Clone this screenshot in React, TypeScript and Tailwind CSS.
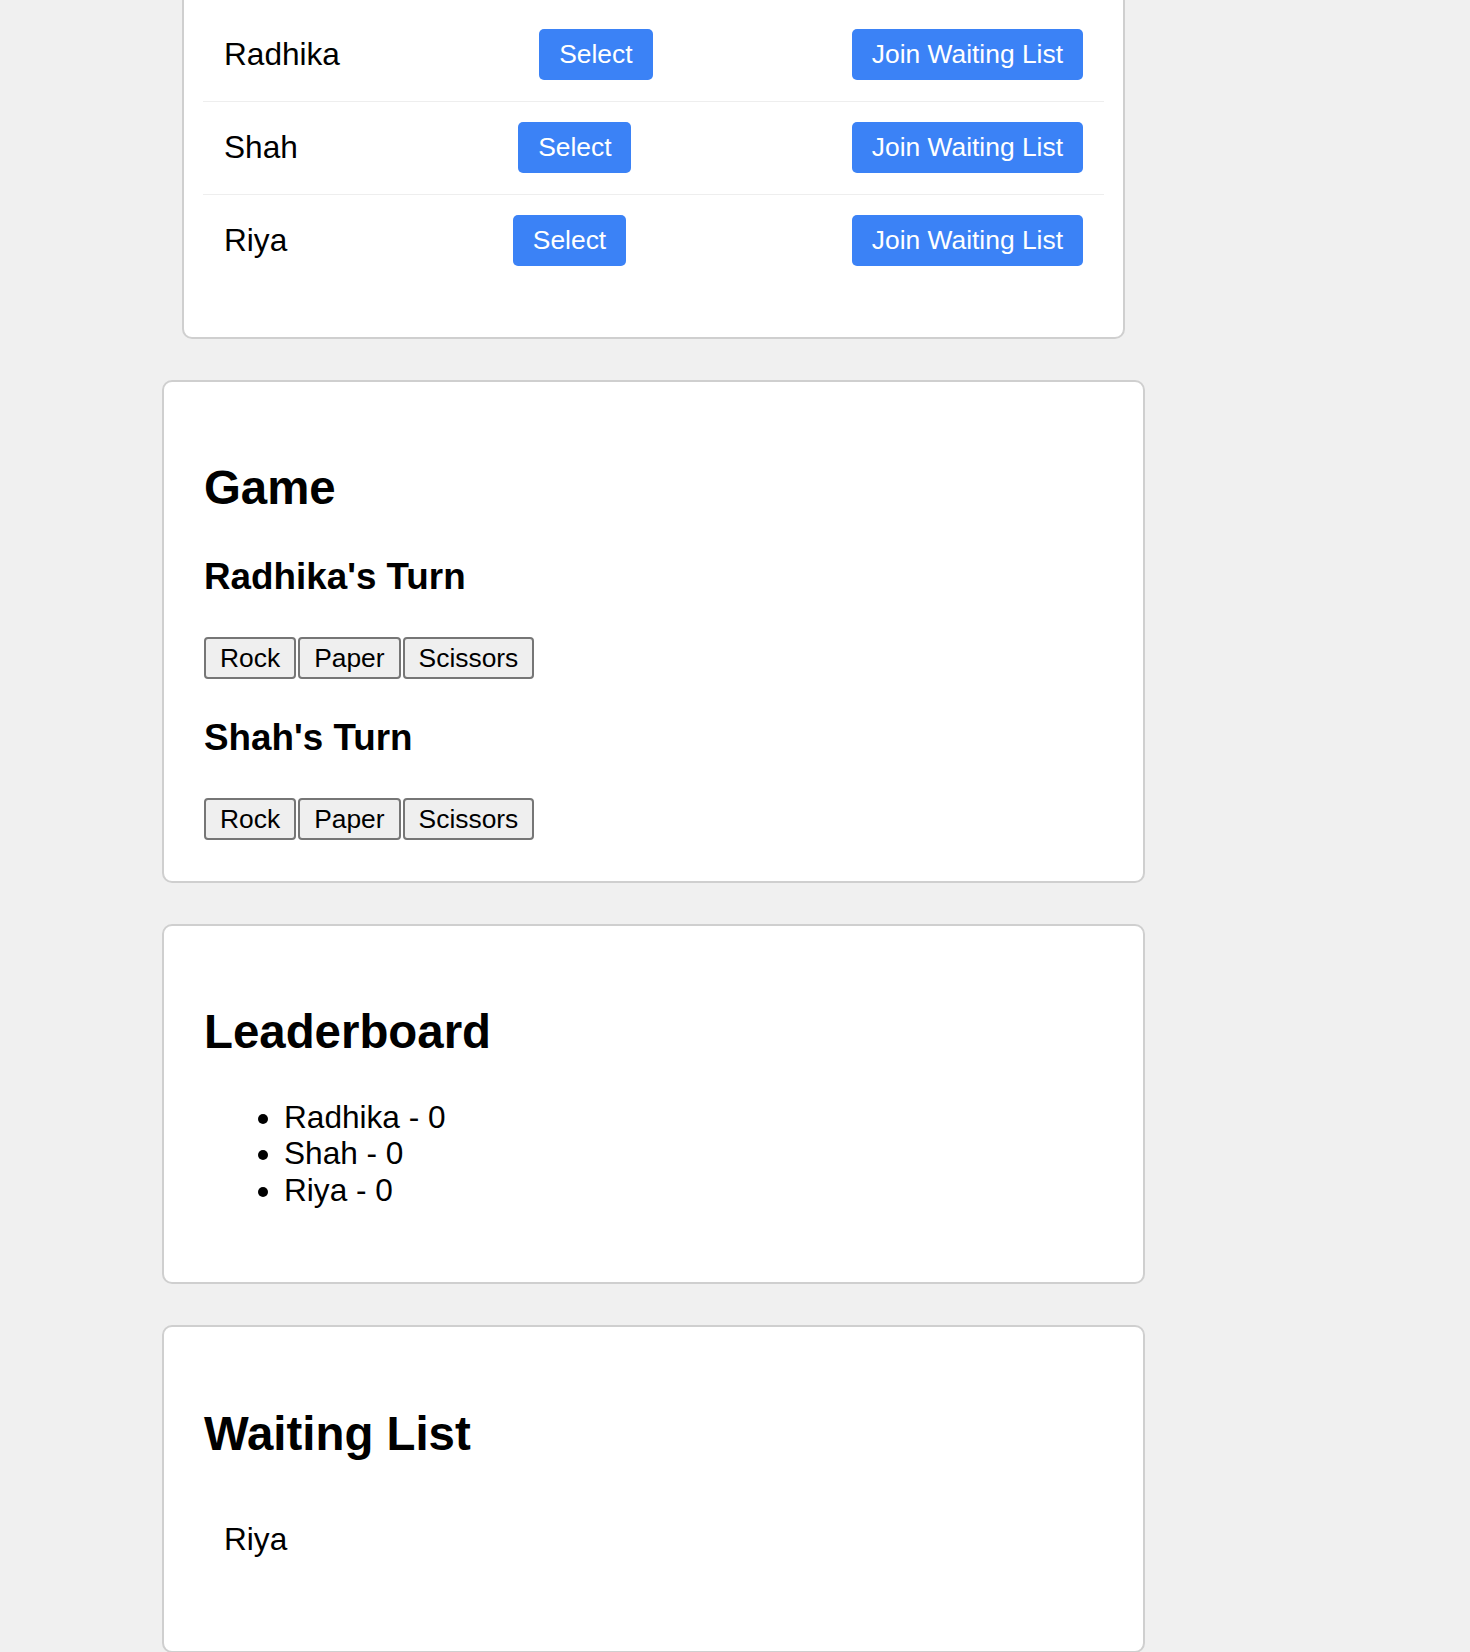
import React from "react";

const players = ["Radhika", "Shah", "Riya"];
const waiting = ["Riya"];
const turns = ["Radhika", "Shah"];
const moves = ["Rock", "Paper", "Scissors"];

const BlueButton = ({ children }: { children: React.ReactNode }) => (
  <button
    className="
      bg-[#3b82f6] text-white rounded-[5px]
      text-[26.4px] leading-[30.4px]
      px-[20px] py-[10.3px]
    "
  >
    {children}
  </button>
);

const Card = ({ children, className = "" }: { children: React.ReactNode; className?: string }) => (
  <section className={`bg-white border-2 border-[#cfcfcf] rounded-[10px] ${className}`}>
    {children}
  </section>
);

const Title = ({ children }: { children: React.ReactNode }) => (
  <h1 className="text-[47.4px] leading-[54.5px] font-bold mt-[39px] mb-0">{children}</h1>
);

const App = () => {
  return (
    <div className="min-h-screen bg-[#f0f0f0] overflow-hidden text-black font-['Liberation_Sans',Arial,Helvetica,sans-serif] text-[31.6px] leading-[36.5px]">
      <div className="ml-[162px] w-[983px] -mt-[44px] flex flex-col gap-[41px]">
        {/* Players list (scrolled, top edge is off screen) */}
        <Card className="mx-5 px-[19px] py-[19px]">
          <ul className="my-[31.6px]">
            {players.map((name) => (
              <li
                key={name}
                className="flex items-center justify-between pl-[21px] pr-[21px] py-[20.5px] border-b border-[#eeeeee] last:border-b-0"
              >
                <span>{name}</span>
                <BlueButton>Select</BlueButton>
                <BlueButton>Join Waiting List</BlueButton>
              </li>
            ))}
          </ul>
        </Card>

        {/* Game */}
        <Card className="pl-10 pr-[39px] pt-10 pb-[41px]">
          <Title>Game</Title>
          {turns.map((name, i) => (
            <div key={name}>
              <h3
                className={`text-[36.8px] leading-[42.3px] font-bold ${
                  i === 0 ? "mt-[40px]" : "mt-[37.5px]"
                }`}
              >
                {name}'s Turn
              </h3>
              <div className="flex gap-[2px] mt-[39.5px]">
                {moves.map((m) => (
                  <button
                    key={m}
                    className="bg-[#efefef] border-2 border-[#767676] rounded-[4px] text-[26.4px] leading-[30.4px] px-[14px] py-[3.6px]"
                  >
                    {m}
                  </button>
                ))}
              </div>
            </div>
          ))}
        </Card>

        {/* Leaderboard */}
        <Card className="pl-10 pr-[39px] pt-10 pb-[42px]">
          <Title>Leaderboard</Title>
          <ul className="list-disc pl-20 mt-[39.3px] mb-[31.6px] leading-[36.65px]">
            {players.map((name) => (
              <li key={name}>
                {name} - 0
              </li>
            ))}
          </ul>
        </Card>

        {/* Waiting list */}
        <Card className="pl-10 pr-[39px] pt-[41px] pb-[41.5px]">
          <Title>Waiting List</Title>
          <ul className="mt-[39.3px] mb-[31.6px]">
            {waiting.map((name) => (
              <li key={name} className="px-5 py-5 border-b border-[#eeeeee] last:border-b-0">
                {name}
              </li>
            ))}
          </ul>
        </Card>
      </div>
    </div>
  );
};

export default App;
